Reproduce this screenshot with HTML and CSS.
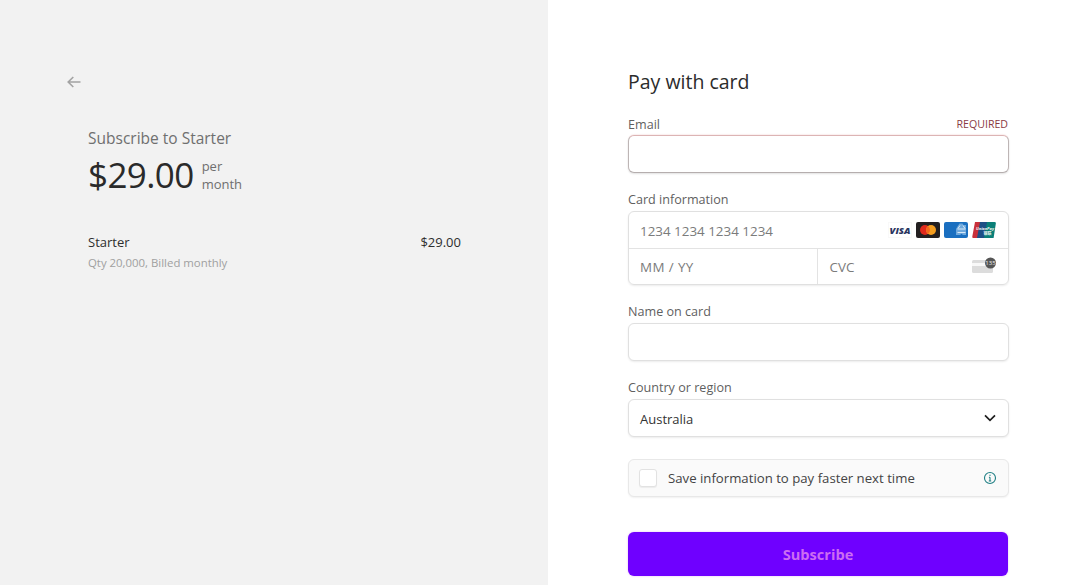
FILE: index.html
```html
<!DOCTYPE html>
<html lang="en">
<head>
<meta charset="utf-8">
<title>Pay with card</title>
<link rel="stylesheet" href="styles.css">
</head>
<body>
<div class="page">
  <aside class="summary">
    <svg class="back" width="14" height="12" viewBox="0 0 14 12" fill="none" stroke="#a3a3a3" stroke-width="1.6"><path d="M13.5 6H1.2M6.3 1 1.2 6l5.1 5"/></svg>
    <div class="product">
      <div class="sub-title">Subscribe to Starter</div>
      <div class="price-row">
        <span class="price">$29.00</span>
        <span class="period">per<br>month</span>
      </div>
      <div class="line">
        <div>
          <div class="line-name">Starter</div>
          <div class="line-meta">Qty 20,000, Billed monthly</div>
        </div>
        <div class="line-price">$29.00</div>
      </div>
    </div>
  </aside>
  <main class="checkout">
    <h1 class="title">Pay with card</h1>
    <div class="field field-email">
      <div class="label-row"><span class="label">Email</span><span class="required">REQUIRED</span></div>
      <div class="box box-error"></div>
    </div>
    <div class="field">
      <div class="label-row"><span class="label">Card information</span></div>
      <div class="card-box">
        <div class="card-row">
          <span class="ph">1234 1234 1234 1234</span>
          <span class="brands">
            <svg width="24" height="16" viewBox="0 0 24 16"><rect x=".25" y=".25" width="23.500" height="15.500" rx="1" fill="#fff" stroke="#eee" stroke-width=".5"/><text x="12" y="11.500" text-anchor="middle" class="visa">VISA</text></svg>
            <svg width="24" height="16" viewBox="0 0 24 16"><rect width="24" height="16" rx="2" fill="#231f20"/><circle cx="9" cy="8" r="5" fill="#e0291d"/><circle cx="15" cy="8" r="5" fill="#f59e1f"/><path d="M12 4a5 5 0 0 1 0 8 5 5 0 0 1 0-8z" fill="#f4661e"/></svg>
            <svg width="24" height="16" viewBox="0 0 24 16"><rect width="24" height="16" rx="2" fill="#1a6fc0"/><path d="M15.500 1.500h3l1 1.500h2.500v10h-3l-1.500-1.300-1.500 1.300h-4V7l1.500-2.500z" fill="#6ea8dc"/><path d="M13.500 7h8M13.500 10.500h8M16 3.500l-2 3M19 3.500l2 3" stroke="#d7e8f7" stroke-width="1" fill="none"/></svg>
            <svg width="24" height="16" viewBox="0 0 24 16"><path d="M3 0h6L6 16H1.300Q0 16 .3 14.500z" fill="#c9303a"/><path d="M8 0h8l-3 16H5z" fill="#1d4f86"/><path d="M15 0h7.500q1.700 0 1.300 1.700L21.600 16H12z" fill="#0a7f78"/><text x="13" y="7.500" text-anchor="middle" class="up">UnionPay</text><text x="15.500" y="13" text-anchor="middle" class="up-cn">银联</text></svg>
          </span>
        </div>
        <div class="card-row card-split">
          <div class="cell cell-exp"><span class="ph ph-exp">MM / YY</span></div>
          <div class="cell cell-cvc">
            <span class="ph">CVC</span>
            <svg width="24" height="18" viewBox="0 0 24 18"><rect x="0" y="3" width="21" height="13" rx="1.500" fill="#dcdcdc"/><rect x="0" y="6" width="21" height="3" fill="#f8f8f8"/><circle cx="18.500" cy="6" r="5.500" fill="#555"/><text x="18.500" y="8" text-anchor="middle" class="cvc-num">135</text></svg>
          </div>
        </div>
      </div>
    </div>
    <div class="field">
      <div class="label-row"><span class="label">Name on card</span></div>
      <div class="box"></div>
    </div>
    <div class="field">
      <div class="label-row"><span class="label">Country or region</span></div>
      <div class="box box-select">
        <span class="value">Australia</span>
        <svg width="12" height="8" viewBox="0 0 12 8" fill="none" stroke="#1f1f1f" stroke-width="1.700"><path d="M1 1.300l5 5 5-5"/></svg>
      </div>
    </div>
    <div class="save">
      <span class="check"></span>
      <span class="save-text">Save information to pay faster next time</span>
      <svg width="14" height="14" viewBox="0 0 14 14" fill="none" stroke="#1f7f84" stroke-width="1.100"><circle cx="7" cy="7" r="5.500"/><path d="M7 6.200v3.600M5.800 10h2.400M5.900 6.200H7"/><path d="M7 3.700v1.100" stroke-width="1.300"/></svg>
    </div>
    <button class="pay" type="button">Subscribe</button>
  </main>
</div>
</body>
</html>
```
FILE: styles.css
```css
* { box-sizing: border-box; }
html, body { margin: 0; height: 100%; overflow: hidden; }
body {
  font-family: "Open Sans", "Noto Sans", "Liberation Sans", sans-serif;
  color: #2b2b2b;
  background: #fff;
}
.page { display: flex; height: 585px; }
.summary {
  width: 548px;
  flex: none;
  background: #f2f2f2;
  padding: 76px 87px 0 67px;
}
.back { display: block; }
.product { margin: 39px 0 0 21px; }
.sub-title { font-size: 15.500px; line-height: 22px; color: #6f6f6f; }
.price-row { display: flex; align-items: center; gap: 8px; margin-top: 4px; }
.price { font-size: 35px; line-height: 44px; color: #2a2a2a; letter-spacing: -.6px; }
.period { font-size: 13px; line-height: 18px; color: #6f6f6f; margin-top: -1px; }
.line { display: flex; justify-content: space-between; margin-top: 35px; }
.line-name { font-size: 13px; line-height: 20px; font-weight: 500; color: #2e2e2e; }
.line-meta { font-size: 11.400px; line-height: 17px; margin-top: 2px; color: #a0a0a0; }
.line-price { font-size: 13px; line-height: 20px; color: #2e2e2e; }
.checkout { width: 380px; margin-left: 80px; padding-top: 68px; }
.title { margin: 0 0 19px; font-size: 19.500px; line-height: 27px; font-weight: 500; color: #2b2b2b; }
.field { margin-bottom: 16px; }
.label-row { display: flex; justify-content: space-between; align-items: center; height: 20px; margin-bottom: 2px; }
.field-email .label-row { margin-bottom: 1px; }
.label { font-size: 12.600px; color: #5f5f5f; }
.required { font-size: 10.600px; color: #8a3a44; }
.box {
  height: 38px;
  margin: 0 -.5px;
  border: 1px solid #e0e0e0;
  border-radius: 6px;
  box-shadow: 0 1px 2px rgba(0,0,0,.08);
  background: #fff;
}
.box-error {
  border-color: #dcb4b4 #bdb5b5 #b5aeae;
  box-shadow: 0 -1px 1px rgba(220,120,120,.12), 0 1px 2px rgba(0,0,0,.12);
}
.box-select { display: flex; align-items: center; justify-content: space-between; padding: 0 12px 0 11.500px; }
.value { font-size: 13px; color: #333; padding-top: 2px; }
.card-box {
  height: 74px;
  margin: 0 -.5px;
  border: 1px solid #e0e0e0;
  border-radius: 6px;
  box-shadow: 0 1px 2px rgba(0,0,0,.08);
  display: flex;
  flex-direction: column;
}
.card-row { flex: 1; display: flex; align-items: center; justify-content: space-between; padding: 0 12px 0 11.500px; }
.card-split { padding: 0; border-top: 1px solid #e3e3e3; align-items: stretch; }
.cell { display: flex; align-items: center; }
.cell-exp { width: 189px; padding-left: 11.500px; border-right: 1px solid #e3e3e3; }
.cell-cvc { flex: 1; justify-content: space-between; padding: 0 12px; }
.ph { font-size: 13.400px; color: #7b7b7b; padding-top: 2px; }
.ph-exp { letter-spacing: .4px; }
.brands { display: flex; gap: 4px; }
.visa { font: italic 800 9.500px "Open Sans", sans-serif; fill: #2a3560; }
.up { font: italic 700 4px "Open Sans", sans-serif; fill: #f1f6f2; }
.up-cn { font: 700 4px "Noto Sans CJK SC", sans-serif; fill: #f1f6f2; }
.cvc-num { font: 6px "Open Sans", sans-serif; fill: #eee; }
.save {
  display: flex;
  align-items: center;
  height: 38px;
  margin: 22px -.5px 0;
  padding: 0 10.500px;
  border: 1px solid #e8e8e8;
  border-radius: 6px;
  background: #fafafa;
  box-shadow: 0 1px 2px rgba(0,0,0,.06);
}
.check {
  width: 18px;
  height: 18px;
  flex: none;
  border: 1px solid #e2e2e2;
  border-radius: 3px;
  background: #fff;
  box-shadow: 0 1px 1px rgba(0,0,0,.06);
}
.save-text { flex: 1; margin-left: 11px; font-size: 13.200px; color: #444; }
.pay {
  display: block;
  width: 380px;
  height: 44px;
  margin-top: 35px;
  border: 0;
  border-radius: 6px;
  background: #6f00ff;
  color: #cc6cf2;
  font: 700 14.600px "Open Sans", sans-serif;
  box-shadow: 0 0 2px rgba(200,100,240,.5);
}
```
